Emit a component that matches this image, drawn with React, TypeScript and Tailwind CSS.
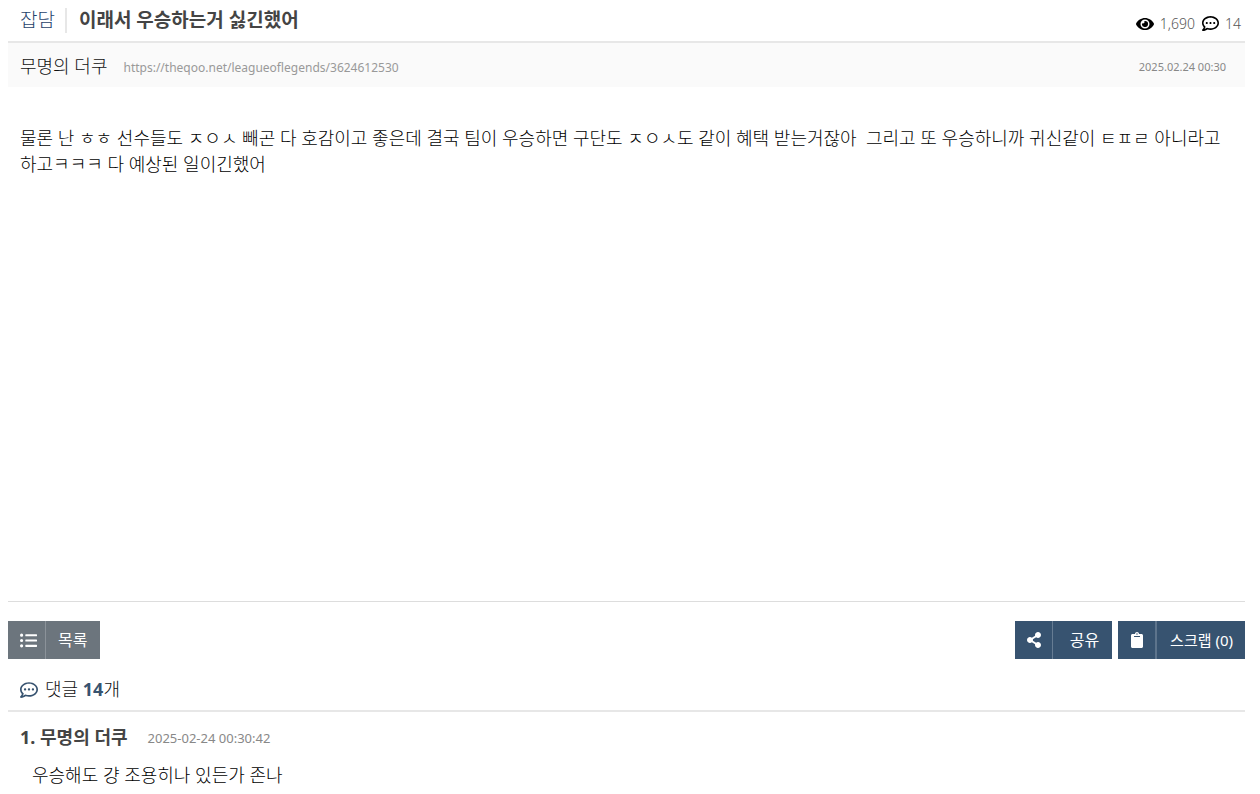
import { FaClipboard, FaEye, FaListUl, FaRegCommentDots, FaShareAlt } from "react-icons/fa";

const comments = [
  {
    id: 1,
    author: "무명의 더쿠",
    date: "2025-02-24 00:30:42",
    text: "우승해도 걍 조용히나 있든가 존나",
  },
];

function PostHeader() {
  return (
    <header>
      <div className="flex items-center justify-between border-b-2 border-[#e7e7e7] pl-3 pr-1 h-[43px]">
        <div className="flex items-center">
          <a
            href="#category"
            className="border-r-2 border-[#e7e7e7] pr-[10px] text-[19px] leading-[25px] font-light text-[#1f426b]"
          >
            잡담
          </a>
          <h1 className="pl-3 text-[19px] leading-[25px] font-bold text-[#444]">
            이래서 우승하는거 싫긴했어
          </h1>
        </div>
        <div className="flex items-center pt-[6px] text-[14px] leading-5 font-light text-[#555]">
          <FaEye className="mr-[6px] size-[18px] text-black" />
          <span>1,690</span>
          <FaRegCommentDots className="ml-[7px] mr-[6px] size-[17px] text-black" />
          <span>14</span>
        </div>
      </div>
      <div className="flex items-center justify-between bg-[#fafafa] h-11 pl-3 pr-[19px]">
        <div className="flex items-center pt-[2px]">
          <span className="text-[18px] leading-6 font-light text-[#111]">무명의 더쿠</span>
          <a href="#post" className="ml-4 pt-1 text-[12px] leading-5 text-[#999]">
            https://theqoo.net/leagueoflegends/3624612530
          </a>
        </div>
        <time className="pt-1 text-[11px] leading-5 text-[#888]">2025.02.24 00:30</time>
      </div>
    </header>
  );
}

function PostButtons() {
  return (
    <div className="flex justify-between border-t border-[#ddd] pt-[19px] text-[16px] text-white">
      <button className="flex h-[38px] items-stretch bg-[#6c757d]">
        <span className="flex w-[38px] items-center justify-end border-r border-[#8b9299] pr-2">
          <FaListUl className="size-[17px]" />
        </span>
        <span className="self-center pl-3 pr-[13px]">목록</span>
      </button>
      <div className="flex gap-[6px]">
        <button className="flex h-[38px] items-stretch bg-[#375370]">
          <span className="flex w-[38px] items-center justify-end border-r border-[#667c93] pr-[10px]">
            <FaShareAlt className="size-4" />
          </span>
          <span className="self-center pl-[17px] pr-[13px]">공유</span>
        </button>
        <button className="flex h-[38px] items-stretch bg-[#375370]">
          <span className="flex w-[39px] items-center justify-center border-r-2 border-[#5d748c]">
            <FaClipboard className="size-4" />
          </span>
          <span className="self-center pl-[13px] pr-3 text-[15px]">스크랩 (0)</span>
        </button>
      </div>
    </div>
  );
}

export default function App() {
  return (
    <div className="bg-white pl-2 pr-[15px] font-['Noto_Sans','Noto_Sans_CJK_KR',sans-serif]">
      <PostHeader />
      <article className="min-h-[514px] px-3 pt-[38px] text-[18px] leading-[26px] font-light text-black">
        <p>
          물론 난 ㅎㅎ 선수들도 ㅈㅇㅅ 빼곤 다 호감이고 좋은데 결국 팀이 우승하면 구단도 ㅈㅇㅅ도 같이 혜택
          받는거잖아&nbsp; 그리고 또 우승하니까 귀신같이 ㅌㅍㄹ 아니라고 하고ㅋㅋㅋ 다 예상된 일이긴했어
        </p>
      </article>
      <PostButtons />
      <section>
        <h2 className="flex h-[53px] items-center border-b-2 border-[#e7e7e7] pl-3 pt-[10px] text-[18px] font-light text-[#111]">
          <FaRegCommentDots className="mr-[7px] size-[18px] text-[#375370]" />
          <span>
            댓글 <b className="font-bold text-[#375370]">14</b>개
          </span>
        </h2>
        <ul>
          {comments.map((comment) => (
            <li key={comment.id} className="pl-3 pt-3 text-black">
              <div className="flex items-center">
                <b className="text-[18px] leading-[26px] font-bold text-[#444]">
                  {comment.id}. {comment.author}
                </b>
                <time className="ml-5 pt-[2px] text-[13px] leading-6 text-[#888]">
                  {comment.date}
                </time>
              </div>
              <p className="pl-3 pt-3 text-[18px] leading-[26px] font-light">{comment.text}</p>
            </li>
          ))}
        </ul>
      </section>
    </div>
  );
}
